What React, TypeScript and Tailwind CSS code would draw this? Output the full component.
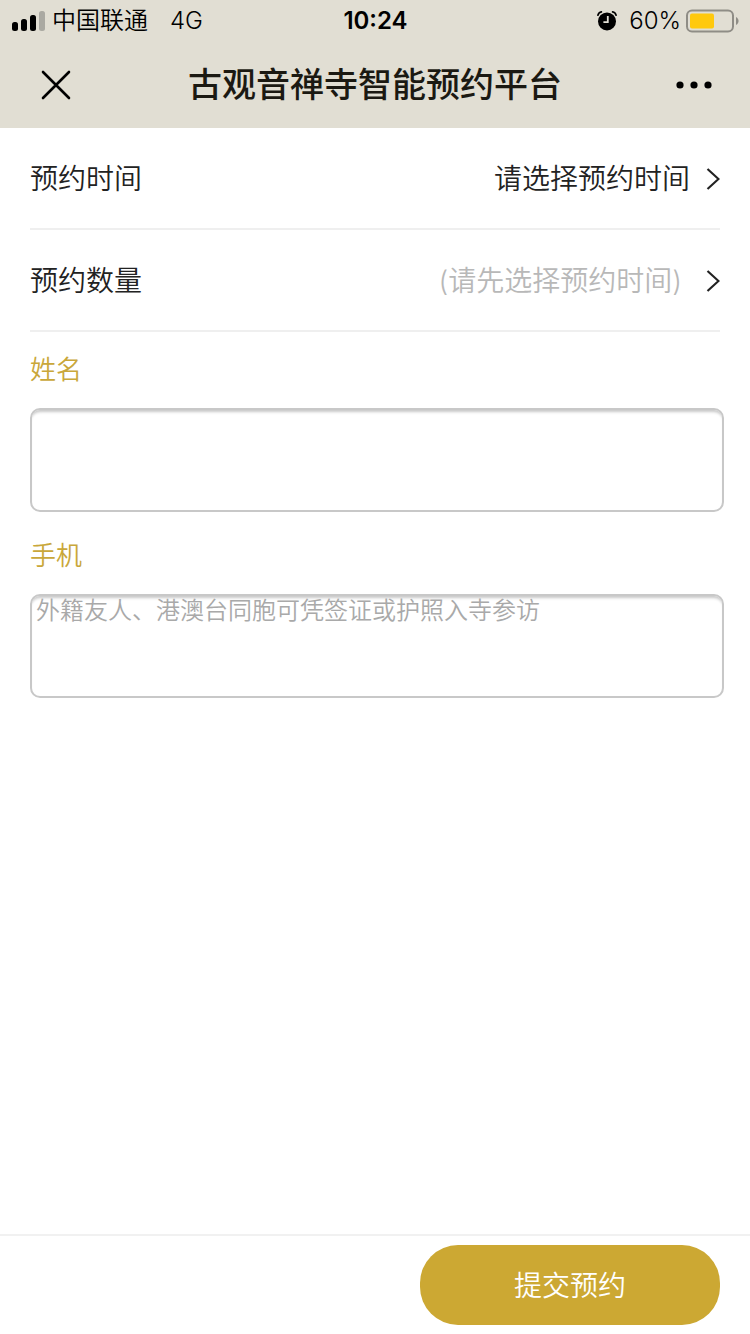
import { useState } from "react";

function SignalIcon() {
  return (
    <svg className="h-5 w-[34px]" viewBox="0 0 34 20" aria-hidden="true">
      <rect x="0" y="11" width="6" height="9" rx="2.5" fill="#000" />
      <rect x="9" y="8" width="6" height="12" rx="2.5" fill="#000" />
      <rect x="18" y="4" width="6" height="16" rx="2.5" fill="#000" />
      <rect x="27" y="0" width="6" height="20" rx="2.5" fill="#aaa9a2" />
    </svg>
  );
}

function AlarmIcon() {
  return (
    <svg className="h-5 w-5" viewBox="0 0 20 20" aria-hidden="true">
      <circle cx="10" cy="10.4" r="9" fill="#000" />
      <path
        d="M0.9 4.2C1.4 2.4 2.6 1.2 4.4 0.9M19.1 4.2C18.6 2.4 17.4 1.2 15.6 0.9"
        stroke="#000"
        strokeWidth="1.7"
        strokeLinecap="round"
        fill="none"
      />
      <path d="M10.8 5V11.2H6.4" stroke="#e2dfd5" strokeWidth="1.8" fill="none" />
    </svg>
  );
}

function BatteryIcon() {
  return (
    <svg className="h-6 w-[53px]" viewBox="0 0 53 24" aria-hidden="true">
      <rect x="1" y="1.5" width="46" height="21" rx="5" fill="none" stroke="#8f8d86" strokeWidth="2" />
      <rect x="4" y="4.5" width="24" height="15" rx="2" fill="#ffc90d" />
      <path d="M50 8C53.4 9.4 53.4 14.6 50 16Z" fill="#8f8d86" />
    </svg>
  );
}

function StatusBar() {
  return (
    <div className="grid h-[42px] grid-cols-[1fr_auto_1fr] items-center pr-[11px] pl-3 text-2xl leading-8 text-black">
      <div className="flex items-center">
        <SignalIcon />
        <span className="ml-1.5">中国联通</span>
        <span className="ml-[22px]">4G</span>
      </div>
      <span className="font-semibold">10:24</span>
      <div className="flex items-center justify-end">
        <AlarmIcon />
        <span className="ml-3">60%</span>
        <span className="ml-[5px]">
          <BatteryIcon />
        </span>
      </div>
    </div>
  );
}

function NavBar() {
  return (
    <div className="flex h-[86px] items-center justify-between px-9">
      <button type="button" aria-label="关闭" className="flex h-10 w-10 items-center justify-center">
        <svg className="h-8 w-8" viewBox="0 0 32 32" aria-hidden="true">
          <path d="M3 3L29 29M29 3L3 29" stroke="#000" strokeWidth="2.6" strokeLinecap="round" />
        </svg>
      </button>
      <h1 className="text-[34px] leading-10 font-medium text-[#1b1912]">古观音禅寺智能预约平台</h1>
      <button type="button" aria-label="更多" className="flex h-10 w-10 items-center justify-center">
        <svg className="h-2 w-9" viewBox="0 0 36 8" aria-hidden="true">
          <circle cx="4" cy="4" r="3.6" />
          <circle cx="18" cy="4" r="3.6" />
          <circle cx="32" cy="4" r="3.6" />
        </svg>
      </button>
    </div>
  );
}

function PickerRow({ label, value, disabled = false }: { label: string; value: string; disabled?: boolean }) {
  return (
    <button
      type="button"
      className="flex h-[102px] w-full items-center border-b-2 border-[#efefef] pt-0.5 text-left text-[28px] leading-10 text-[#222]"
    >
      <span className="flex-1">{label}</span>
      <span className={disabled ? "mr-6 text-[#b8b8b8]" : "mr-4"}>{value}</span>
      <svg className="h-6 w-3.5" viewBox="0 0 14 24" aria-hidden="true">
        <path d="M1.5 2L12.5 12L1.5 22" stroke="#222" strokeWidth="2.2" fill="none" />
      </svg>
    </button>
  );
}

interface FieldProps {
  id: string;
  label: string;
  type: string;
  placeholder?: string;
  value: string;
  onChange: (value: string) => void;
}

function Field({ id, label, type, placeholder, value, onChange }: FieldProps) {
  return (
    <div className="flex flex-col gap-[22px]">
      <label htmlFor={id} className="text-[26px] leading-8 text-[#c9a73a]">
        {label}
      </label>
      <input
        id={id}
        type={type}
        placeholder={placeholder}
        value={value}
        onChange={(e) => onChange(e.target.value)}
        className="h-[104px] w-full rounded-[10px] border-2 border-[#c8c8c8] bg-white px-1 pb-18 text-2xl leading-7 text-[#222] shadow-[inset_0_4px_3px_-2px_#c8c8c8] outline-none placeholder:text-[#a9a9a9]"
      />
    </div>
  );
}

export default function App() {
  const [name, setName] = useState("");
  const [phone, setPhone] = useState("");

  return (
    <div className="flex min-h-screen flex-col bg-white font-[Inter,'Noto_Sans_CJK_SC',sans-serif] font-[350]">
      <header className="bg-[#e1ded3]">
        <StatusBar />
        <NavBar />
      </header>
      <form className="flex flex-1 flex-col" onSubmit={(e) => e.preventDefault()}>
        <div className="px-[30px]">
          <PickerRow label="预约时间" value="请选择预约时间" />
          <PickerRow label="预约数量" value="(请先选择预约时间)" disabled />
        </div>
        <div className="flex flex-col gap-7 pt-[22px] pr-[26px] pl-[30px]">
          <Field id="name" label="姓名" type="text" value={name} onChange={setName} />
          <Field
            id="phone"
            label="手机"
            type="tel"
            placeholder="外籍友人、港澳台同胞可凭签证或护照入寺参访"
            value={phone}
            onChange={setPhone}
          />
        </div>
        <footer className="mt-auto flex justify-end border-t-2 border-[#f1f1f1] px-[30px] py-[9px]">
          <button
            type="submit"
            className="h-20 w-[300px] rounded-[38px] bg-[#cca833] pt-0.5 text-[28px] leading-10 text-white"
          >
            提交预约
          </button>
        </footer>
      </form>
    </div>
  );
}
